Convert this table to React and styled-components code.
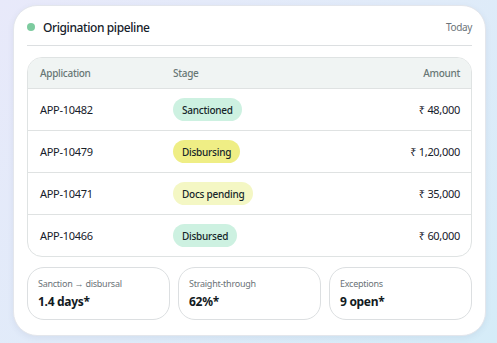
import React from "react";
import styled, { createGlobalStyle } from "styled-components";

const rows = [
  { id: "APP-10482", stage: "Sanctioned", tone: "mint", amount: "₹ 48,000" },
  { id: "APP-10479", stage: "Disbursing", tone: "yellow", amount: "₹ 1,20,000" },
  { id: "APP-10471", stage: "Docs pending", tone: "pale", amount: "₹ 35,000" },
  { id: "APP-10466", stage: "Disbursed", tone: "mint", amount: "₹ 60,000" },
];

const stats = [
  { label: "Sanction → disbursal", value: "1.4 days*" },
  { label: "Straight-through", value: "62%*" },
  { label: "Exceptions", value: "9 open*" },
];

const tones = {
  mint: "#cdf1e1",
  yellow: "#efee85",
  pale: "#f4f7c4",
};

export default function App() {
  return (
    <Page>
      <Global />
      <Card>
        <Header>
          <Title>
            <Dot />
            Origination pipeline
          </Title>
          <When>Today</When>
        </Header>
        <Table>
          <HeadRow>
            <HeadCell>Application</HeadCell>
            <HeadCell>Stage</HeadCell>
            <HeadCell $right>Amount</HeadCell>
          </HeadRow>
          {rows.map((r) => (
            <Row key={r.id}>
              <Cell>{r.id}</Cell>
              <Cell>
                <Pill $tone={r.tone}>{r.stage}</Pill>
              </Cell>
              <Cell $right>{r.amount}</Cell>
            </Row>
          ))}
        </Table>
        <Stats>
          {stats.map((s) => (
            <Stat key={s.label}>
              <StatLabel>{s.label}</StatLabel>
              <StatValue>{s.value}</StatValue>
            </Stat>
          ))}
        </Stats>
      </Card>
    </Page>
  );
}

const Global = createGlobalStyle`
  html, body { margin: 0; padding: 0; }
  body {
    font-family: "Noto Sans", sans-serif;
    color: #16202a;
  }
  * { box-sizing: border-box; }
`;

const Page = styled.div`
  width: 497px;
  height: 343px;
  padding: 5px 11px 8px 13px;
  background: linear-gradient(135deg, #e8e9fa 0%, #e0ebf9 50%, #d5ecf8 100%);
`;

const Card = styled.div`
  background: #ffffff;
  border-radius: 24px;
  border: 1px solid #e3e6ec;
  box-shadow: 0 2px 6px rgba(60, 80, 120, 0.08);
  height: 331px;
  padding: 0 13px;
  display: flex;
  flex-direction: column;
`;

const Header = styled.div`
  display: flex;
  align-items: center;
  justify-content: space-between;
  height: 40px;
  padding-top: 3px;
  border-bottom: 1px solid #dcdfe1;
`;

const Title = styled.div`
  display: flex;
  align-items: center;
  gap: 8px;
  font-size: 12px;
  font-weight: 500;
  letter-spacing: -0.4px;
  color: #15202a;
`;

const Dot = styled.span`
  width: 8px;
  height: 8px;
  border-radius: 50%;
  background: #7dcb9f;
`;

const When = styled.span`
  font-size: 10px;
  letter-spacing: -0.35px;
  color: #6b7378;
`;

const Table = styled.div`
  margin-top: 11px;
  border: 1px solid #dfe3e3;
  border-radius: 15px;
  overflow: hidden;
`;

const grid = `
  display: grid;
  grid-template-columns: 133px 1fr 150px;
  align-items: center;
  padding: 0 11px 0 12px;
`;

const HeadRow = styled.div`
  ${grid}
  height: 30px;
  background: #f0f4f3;
`;

const HeadCell = styled.div`
  font-size: 10px;
  font-weight: 500;
  letter-spacing: -0.3px;
  color: #687775;
  text-align: ${(p) => (p.$right ? "right" : "left")};
`;

const Row = styled.div`
  ${grid}
  height: 42px;
  border-top: 1px solid #dfe2e2;
`;

const Cell = styled.div`
  font-size: 11px;
  letter-spacing: -0.3px;
  color: #16202a;
  text-align: ${(p) => (p.$right ? "right" : "left")};
`;

const Pill = styled.span`
  display: inline-flex;
  align-items: center;
  height: 23px;
  padding: 0 9px;
  border-radius: 12px;
  font-size: 10px;
  font-weight: 500;
  letter-spacing: -0.25px;
  color: #16262a;
  background: ${(p) => tones[p.$tone]};
`;

const Stats = styled.div`
  margin-top: 10px;
  display: grid;
  grid-template-columns: repeat(3, 1fr);
  gap: 8px;
`;

const Stat = styled.div`
  height: 53px;
  border: 1px solid #dcdfe1;
  border-radius: 17px;
  padding: 9px 10px 0;
`;

const StatLabel = styled.div`
  font-size: 9px;
  letter-spacing: -0.25px;
  color: #6b7378;
  line-height: 13px;
`;

const StatValue = styled.div`
  margin-top: 3px;
  font-size: 12px;
  font-weight: 700;
  letter-spacing: -0.3px;
  color: #121a22;
`;
